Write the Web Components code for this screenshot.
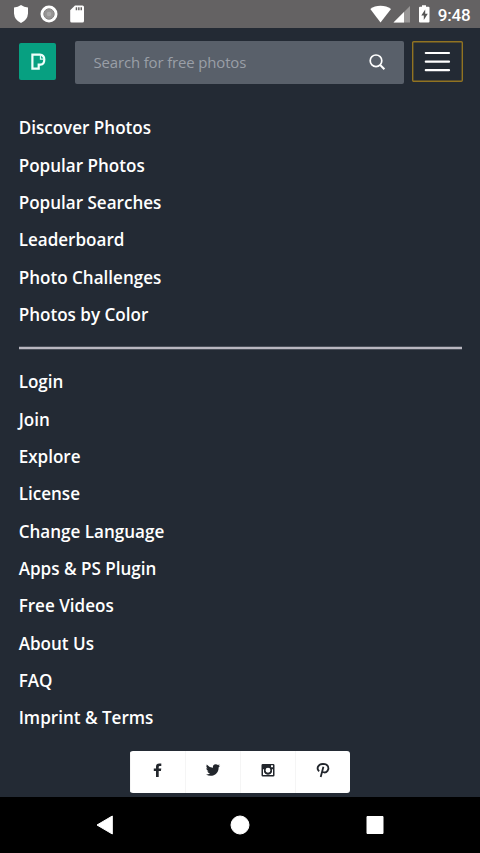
<!DOCTYPE html>
<html lang="en">
<head>
<meta charset="utf-8">
<title>Free photos menu</title>
<style>
html,body{margin:0;height:100%;background:#232a34}
body{overflow:hidden;font-family:"Open Sans","Noto Sans",sans-serif}
</style>
</head>
<body>
<photo-app></photo-app>
<script>
const define = (name, html) => {
  const t = document.createElement('template');
  t.innerHTML = html;
  customElements.define(name, class extends HTMLElement {
    constructor() {
      super();
      this.attachShadow({mode: 'open'}).appendChild(t.content.cloneNode(true));
    }
  });
};

define('status-bar', `
<style>
:host{display:flex;align-items:center;height:28px;box-sizing:border-box;background:#646263;color:#fff;font:500 17px Roboto,sans-serif}
svg{display:block;flex:none}
.right{margin-left:auto;display:flex;align-items:center;height:28px;padding-right:9.500px}
time{line-height:28px;padding-top:1px;letter-spacing:-.2px}
</style>
<svg width="100" height="28" viewBox="0 0 100 28" fill="#fff">
<path d="M21 5Q24 7.300 28 7.500V13.500Q27.500 20 21 23Q14.500 20 14 13.500V7.500Q18 7.300 21 5Z"/>
<circle cx="49" cy="14" r="8.500"/><circle cx="49" cy="14" r="5.200" fill="#969494" stroke="#858383"/><circle cx="49" cy="14" r="2.300" fill="#aaa9a9"/>
<path d="M75 5.500H82.500Q84 5.500 84 7V21Q84 22.500 82.500 22.500H71.700Q70.200 22.500 70.200 21V10.300Z"/><path d="M75.700 7.300h1.500v3h-1.500zm2.400 0h1.500v3h-1.500zm2.400 0h1.500v3h-1.500z" fill="#646262"/>
</svg>
<div class="right">
<svg width="68" height="28" viewBox="370 0 68 28" fill="#fff">
<path d="M380.500 22.500L370.300 9Q374.500 5.800 380.500 5.800T391 9Z"/>
<path d="M410 6V22.500H393.500Z" fill="#989696"/><path d="M404 12V22.500H393.500Z"/>
<path d="M422 5.200h4v1.600h2.500q1 0 1 1V21.500q0 1-1 1h-8.500q-1 0-1-1V7.800q0-1 1-1h2z"/><path d="M425.200 9.500L421.300 15.500H423.800V20L427.800 13.700H425.200Z" fill="#555"/>
</svg><time>9:48</time></div>`);

define('brand-logo', `
<style>:host{display:block;width:37px;height:37px;border-radius:2px;background:#07a081}svg{display:block}</style>
<svg width="37" height="37" viewBox="0 0 37 37" fill="none" stroke="#effffb" stroke-width="2.200"><path d="M13.400 11.600H20.800Q25.300 12 25.300 16.600Q25.300 21.600 21.600 21.600H19.700V25.700H13.400Z"/><path d="M21.500 12V16.200H25" stroke="#d7fff5" stroke-width="1.300"/></svg>`);

define('search-field', `
<style>
:host{display:flex;box-sizing:border-box;width:329px;height:43px;padding:0 17.500px 0 19px;align-items:center;justify-content:space-between;background:#59606a;border-radius:2px;color:#9a9fa7;font-size:14.930px}
span{line-height:42px;letter-spacing:-.13px;margin-top:-2px}
svg{display:block;margin-top:-1px}
</style>
<span><slot></slot></span>
<svg width="18" height="18" viewBox="0 0 18 18" fill="none" stroke="#fff" stroke-width="1.700"><circle cx="8" cy="7.800" r="5.800"/><path d="M12.200 12L16.400 16.200" stroke-width="2"/></svg>`);

define('menu-button', `
<style>
:host{display:block;box-sizing:border-box;width:51px;height:41px}
svg{display:block}
</style><svg width="51" height="41" viewBox="0 0 51 41"><rect x=".7" y=".7" width="49.600" height="39.600" rx="1" fill="none" stroke="#917321" stroke-width="1.400"/><path d="M13.800 12H37M13.800 20.700H37M13.800 29.200H37" stroke="#fff" stroke-width="2.200" stroke-linecap="round"/></svg>`);

define('site-header', `
<style>:host{display:flex;align-items:flex-start;box-sizing:border-box;height:69px;padding:13px 17px 0 19px}
brand-logo{margin-top:2px}search-field{margin-left:18.500px}menu-button{margin-left:auto}</style>
<brand-logo></brand-logo><search-field>Search for free photos</search-field><menu-button></menu-button>`);

define('menu-item', `
<style>:host{display:block;height:37.330px;line-height:37.330px;font-size:17.070px;font-weight:600;color:#fff;white-space:nowrap}</style><slot></slot>`);

define('menu-group', `<style>:host{display:flex;flex-direction:column;padding:0 18.670px}</style><slot></slot>`);
define('menu-rule', `<style>:host{display:block;margin:13px 18px 13px 19px}svg{display:block}</style><svg width="443" height="4" viewBox="0 0 443 4"><path d="M0 2H443" stroke="#b9b7c0" stroke-width="2.400"/></svg>`);
define('social-link', `
<style>:host{display:flex;flex:1;align-items:center;justify-content:center;border-left:1px solid #f5f5f5}:host(:first-child){border-color:transparent}</style><slot></slot>`);

define('social-links', `
<style>
:host{display:flex;width:219.600px;height:42px;margin:14px 0 0 130.400px;background:#fff;border-radius:3px;overflow:hidden}
svg{display:block;width:18px;height:18px;margin-top:-3px;fill:#22262c}
</style>
<social-link><svg viewBox="0 0 18 18"><path d="M7 16V10H4.800V7.500H7V5.700Q7 2.600 10.300 2.600H12.300V5.100H10.800Q9.700 5.100 9.700 6.100V7.500H12.300L11.900 10H9.700V16Z"/></svg></social-link>
<social-link><svg viewBox="0 0 18 18"><path d="M2.700 3.600Q5 6.500 9 6.800Q8.400 3.300 11.800 3.200Q13 3.200 13.900 4.100L15.700 3.400L14.600 5.100L16.200 4.700L14.700 6.300Q14.600 12.500 9.800 14.300Q5.500 15.700 2 13.400Q4.400 13.500 6 12.200Q4 12 3.300 10.200H4.600Q2.300 9.200 2.300 7L3.600 7.400Q1.700 5.700 2.700 3.600Z"/></svg></social-link>
<social-link><svg viewBox="0 0 18 18"><path fill-rule="evenodd" d="M3.800 3H14.200Q15.500 3 15.500 4.300V14.200Q15.500 15.500 14.200 15.500H3.800Q2.500 15.500 2.500 14.200V4.300Q2.500 3 3.800 3ZM4 8.300V14H14V8.300H12.700A4 4 0 1 1 5.300 8.300ZM12 4.300V6.300H14V4.300Z"/><circle cx="9" cy="9.300" r="3.200" fill="#fff" stroke="#22262c" stroke-width="1.500"/></svg></social-link>
<social-link><svg viewBox="0 0 18 18"><path d="M5.200 10.200C2.400 8.200 3.200 3.100 9 2.800C14.500 2.800 15.400 7.100 13.500 9.900C11.700 12.300 8.600 11.700 8.100 9.900M9.400 5.800L6.700 16" fill="none" stroke="#22262c" stroke-width="1.800"/></svg></social-link>`);

define('system-nav', `
<style>:host{display:flex;flex:none;height:56px;background:#000}svg{display:block}</style>
<svg width="480" height="56" viewBox="0 0 480 56" fill="#fff" stroke="#fff" stroke-linejoin="round"><path d="M97 28L112.300 19V37Z"/><circle cx="240" cy="28" r="9"/><path d="M367 19.500H383V36.500H367Z"/></svg>`);

define('photo-app', `
<style>
:host{display:flex;flex-direction:column;width:480px;height:853px;background:#232a34;overflow:hidden}
main{flex:1;min-height:0}
.first{padding-top:12.330px}
</style>
<status-bar></status-bar>
<main>
<site-header></site-header>
<menu-group class="first"><menu-item>Discover Photos</menu-item><menu-item>Popular Photos</menu-item><menu-item>Popular Searches</menu-item><menu-item>Leaderboard</menu-item><menu-item>Photo Challenges</menu-item><menu-item>Photos by Color</menu-item></menu-group>
<menu-rule></menu-rule>
<menu-group><menu-item>Login</menu-item><menu-item>Join</menu-item><menu-item>Explore</menu-item><menu-item>License</menu-item><menu-item>Change Language</menu-item><menu-item>Apps &amp; PS Plugin</menu-item><menu-item>Free Videos</menu-item><menu-item>About Us</menu-item><menu-item>FAQ</menu-item><menu-item>Imprint &amp; Terms</menu-item></menu-group>
<social-links></social-links>
</main>
<system-nav></system-nav>`);
</script>
</body>
</html>
